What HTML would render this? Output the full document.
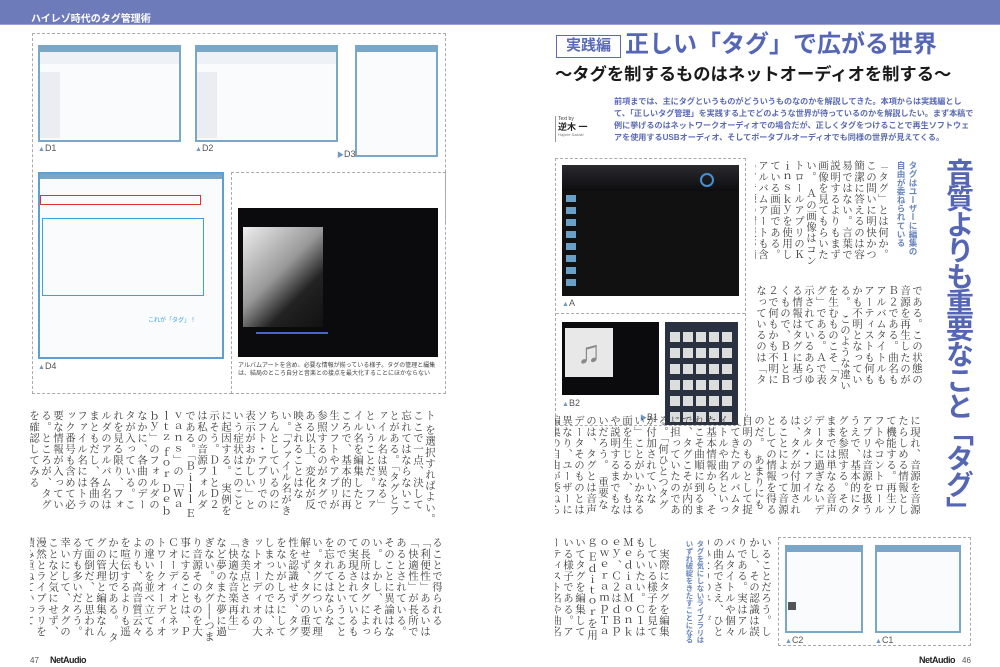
<!DOCTYPE html>
<html><head><meta charset="utf-8">
<style>
*{margin:0;padding:0;box-sizing:border-box}
body{width:1000px;height:667px;background:#fff;position:relative;overflow:hidden;font-family:"Liberation Sans","Noto Sans CJK JP",sans-serif}
.a{position:absolute}
.hdr{left:0;top:0;width:1000px;height:25px;background:#6e7bbb;border-bottom:1px solid #9aa3d3}
.v{position:absolute;writing-mode:vertical-rl;font-family:"Liberation Serif","Noto Serif CJK SC",serif;font-size:10.5px;line-height:12px;color:#3a3a3a;overflow:hidden;letter-spacing:0.6px}
.hb{position:absolute;writing-mode:vertical-rl;font-family:"Liberation Sans","Noto Sans CJK JP",sans-serif;font-weight:bold;color:#6a86bf;font-size:8.6px;line-height:12px;overflow:hidden}
.dash{position:absolute;border:1px dashed #aaa}
.win{position:absolute;background:#fafbfc;border:2px solid #7aa6c8}
.win:before{content:"";position:absolute;left:0;top:0;right:0;height:5px;background:#7aa6c8}
.dark{position:absolute;background:#0b0b0d}
.cap{position:absolute;font-size:9px;color:#555}
.cap b{color:#6f98c4;font-weight:normal;font-size:7px}
</style></head><body>
<div class="a hdr"></div>
<div class="a" style="left:31px;top:10px;color:#fff;font-size:10px;font-weight:bold">ハイレゾ時代のタグ管理術</div>

<!-- LEFT PAGE photos -->
<div class="dash" style="left:32px;top:33px;width:414px;height:190px;border-bottom:none"></div>
<div class="win" style="left:38px;top:45px;width:143px;height:97px"></div>
<div class="a" style="left:40px;top:52px;width:139px;height:12px;background:#eef2f6"></div>
<div class="a" style="left:40px;top:72px;width:20px;height:66px;background:#eaeef3"></div>
<div class="win" style="left:195px;top:45px;width:143px;height:97px"></div>
<div class="a" style="left:197px;top:52px;width:139px;height:12px;background:#eef2f6"></div>
<div class="a" style="left:197px;top:72px;width:20px;height:66px;background:#eaeef3"></div>
<div class="win" style="left:355px;top:45px;width:83px;height:112px"></div>
<div class="cap" style="left:38px;top:143px"><b>▲</b>D1</div>
<div class="cap" style="left:195px;top:143px"><b>▲</b>D2</div>
<div class="cap" style="left:337px;top:149px"><b>▶</b>D3</div>

<div class="win" style="left:38px;top:172px;width:186px;height:187px;border-color:#5d9fd0"></div>
<div class="a" style="left:40px;top:195px;width:161px;height:10px;border:1.5px solid #e03030"></div>
<div class="a" style="left:42px;top:218px;width:162px;height:78px;border:1.5px solid #3aa0e0"></div>
<div class="a" style="left:148px;top:315px;color:#3aa0e0;font-size:6px">これが「タグ」！</div>
<div class="cap" style="left:38px;top:361px"><b>▲</b>D4</div>

<div class="dash" style="left:231px;top:172px;width:215px;height:222px"></div>
<div class="dash" style="left:32px;top:222px;width:200px;height:172px;border-top:none;border-right:none"></div>
<div class="dark" style="left:238px;top:208px;width:200px;height:149px"></div>
<div class="a" style="left:243px;top:227px;width:80px;height:100px;background:linear-gradient(135deg,#eee,#999 45%,#222 70%,#111)"></div>
<div class="a" style="left:256px;top:332px;width:72px;height:2px;background:#4466cc"></div>
<div class="a" style="left:238px;top:362px;width:205px;font-size:6px;line-height:8px;color:#444">アルバムアートを含め、必要な情報が揃っている様子。タグの管理と編集は、結局のところ自分と音楽との接点を最大化することにほかならない</div>

<!-- LEFT PAGE TEXT -->
<div class="v" style="left:30px;top:410px;width:405px;height:110px">ト を選択すればよい。　ここで一点、決して忘れてはならないことがある。「タグとファイル名は異なる」ということだ。ファイル名を編集したところで、基本的に再生ソフトやアプリが参照するのがタグである以上、変化が反映されることはない。「ファイル名がきちんとしているのにソフト・アプリでの表示がおかしい」という症状はこのことに起因する。　実例を示そう。Ｄ１とＤ２は私の音源フォルダである。「Ｂｉｌｌ Ｅｖａｎｓ」の「Ｗａｌｔｚ ｆｏｒ Ｄｅｂｂｙ」のフォルダのなかに、各曲のデータが入っている。これを見る限り、フォルダのアルバム名はまともだし、各曲のファイル名にはトラック番号も含めて必要な情報が入っている。ところが、タグを確認してみると……（Ｄ３）。もちろんこれは極端な例だが、結局のところ、これと同じことが起こり得る。　Ｄ４の画像を見てみよう。これはＭｅｄｉａＭｏｎｋｅｙのタグ編集画面で、「ファイル名」と「タグ」が明確に区別されているのが分かる。残念ながらこの認識が十分に根づいているとは言い難く、それに起因する誤解や混乱もいまだに多い。　ネットオーディオは音質もさることながら、音源にディスクではなくデジタル・ファイルを用い</div>
<div class="v" style="left:30px;top:537px;width:412px;height:110px">ることで得られる「利便性」あるいは「快適性」が長所であるとされている。そのことに異論はない。しかし、それらの長所はタグによって実現されているものであるということを忘れてはならない。タグについて理解せず、タグの重要性を認識せず、タグをないがしろにしてしまったのでは、ネットオーディオの大きな美点とされる「快適な音楽再生」など夢のまた夢に過ぎない。タグ──つまり音源そのものを大事にすることは、ＰＣオーディオとネットワークオーディオの違いを並べ立てるよりも、高音質云々を喧伝するよりも遥かに大切である。　タグの管理と編集なんて面倒だ、と思われる方も多いだろう。幸いにして、タグのことなど気にせず、漫然とライブラリを積み重ねていっても、ある程度までは何とかなる場合が多い。しかし、いずれそういったライブラリは破綻をきたすことになる。冒頭で示した画像のように、ライブラリの各所で意図しない分断が生じ、正体不明の音源がはびこる。聴きたい音源を探し出すことも著しく困難になる。　タグの管理と編集は究極的にはユーザー自身に委ねられているということを忘れてはならない。　ひとりひとりの「こだわり」こそ快適性の源となる。</div>

<div class="a" style="left:30px;top:656px;font-size:8px;color:#555">47</div>
<div class="a" style="left:50px;top:655px;font-size:9px;font-weight:bold;color:#222;letter-spacing:-0.5px">NetAudio</div>

<!-- RIGHT PAGE -->
<div class="a" style="left:556px;top:35px;width:65px;height:23px;border:1.5px solid #5a6ab5;color:#5a6ab5;font-weight:bold;font-size:15px;line-height:20px;text-align:center">実践編</div>
<div class="a" style="left:625px;top:30px;color:#5566b5;font-weight:bold;font-size:24px;line-height:30px;white-space:nowrap">正しい「タグ」で広がる世界</div>
<div class="a" style="left:555px;top:63px;color:#1a1a1a;font-weight:bold;font-size:17.3px;line-height:22px;white-space:nowrap">～タグを制するものはネットオーディオを制する～</div>
<div class="a" style="left:555px;top:116px;border-left:1px solid #999;padding-left:2px;width:45px;height:26px">
<div style="font-size:5px;color:#444">Text by</div>
<div style="font-size:9px;font-weight:bold;color:#222;line-height:10px">逆木 一</div>
<div style="font-size:4px;color:#777;font-style:italic">Hajime Sakaki</div></div>
<div class="a" style="left:614px;top:96px;width:362px;color:#5a6ab5;font-weight:bold;font-size:8.1px;line-height:12px">前項までは、主にタグというものがどういうものなのかを解説してきた。本項からは実践編として、「正しいタグ管理」を実践する上でどのような世界が待っているのかを解説したい。まず本稿で例に挙げるのはネットワークオーディオでの場合だが、正しくタグをつけることで再生ソフトウェアを使用するUSBオーディオ、そしてポータブルオーディオでも同様の世界が見えてくる。</div>

<div class="dash" style="left:555px;top:158px;width:191px;height:268px"></div>
<div class="a" style="left:556px;top:313px;width:189px;height:0;border-top:1px dashed #aaa"></div>
<div class="dark" style="left:562px;top:165px;width:177px;height:131px;background:#111"></div>
<div class="a" style="left:562px;top:165px;width:177px;height:26px;background:linear-gradient(#2a2a2e,#0d0d10)"></div>
<div class="a" style="left:700px;top:173px;width:14px;height:14px;border-radius:50%;border:2px solid #4a8fd0"></div>
<div class="a" style="left:566px;top:195px;width:10px;height:95px;background:repeating-linear-gradient(#6aa0c8 0 7px,#111 7px 12px)"></div>
<div class="cap" style="left:562px;top:298px"><b>▲</b>A</div>
<div class="dark" style="left:562px;top:322px;width:97px;height:73px"></div>
<div class="a" style="left:565px;top:328px;width:48px;height:49px;background:#e8e8e8;color:#888;font-size:32px;line-height:49px;text-align:center">♫</div>
<div class="cap" style="left:562px;top:398px"><b>▲</b>B2</div>
<div class="a" style="left:665px;top:322px;width:73px;height:103px;background:#2a3242"></div>
<div class="a" style="left:670px;top:332px;width:64px;height:91px;background:repeating-linear-gradient(90deg,#ddd 0 10px,transparent 10px 13px),#2a3242;-webkit-mask:repeating-linear-gradient(#000 0 10px,transparent 10px 16px);mask:repeating-linear-gradient(#000 0 10px,transparent 10px 16px)"></div>
<div class="cap" style="left:640px;top:412px"><b>▶</b>B1</div>

<div class="a" style="left:942px;top:158px;width:32px;writing-mode:vertical-rl;color:#5566b5;font-weight:bold;font-size:28px;line-height:32px;letter-spacing:-2px">音質よりも重要なこと「タグ」</div>
<div class="hb" style="left:893px;top:161px;width:26px;height:100px">タグはユーザーに編集の自由が委ねられている</div>

<div class="v" style="left:755px;top:160px;width:133px;height:110px">「タグ」とは何か。この問いに明快かつ簡潔に答えるのは容易ではない。言葉で説明するよりもまず画像を見てもらいたい。　Ａの画像はコントロールアプリのＫｉｎｓｋｙを使用している画面である。アルバムアートも含め、音源の情報が満載である。次にＢ１の画像を見てもらいたい。アルバムアートは一切表示されず、無意味な文字列と「不明」が満載</div>
<div class="v" style="left:755px;top:285px;width:167px;height:110px">である。この状態の音源を再生したのがＢ２である。曲名もアルバムタイトルもアーティストも何もかも不明となっている。　このような違いを生むものこそ「タグ」である。Ａで表示されているあらゆる情報はタグに基づくもので、Ｂ１とＢ２で何もかも不明になっているのは「タグが付加されていない」からにほかならない。すなわち、「タグ」とは「音源に内的に付加された情報」と、その総体」を指す。そして「内的に」とは言いつつも、あらゆる局面で表</div>
<div class="v" style="left:555px;top:415px;width:365px;height:105px">に現れ、音源を音源たらしめる情報として機能する。再生ソフトやコントロールアプリは音源を扱ううえで、基本的にタグを参照する。そのままでは単なる音声データに過ぎないデジタル・ファイルは、タグが付加されることによって音源としての情報を得るのだ。　あまりにも自明のものとして捉えてきたアルバムタイトルや曲名といった基本情報から、それこそ曲順に到るまで、タグこそが内的に担っていたのである。「何ひとつタグが付加されていない」ことがいかなる面を生じるか、もはや説明するまでもないだろう。　重要なのは、タグとは音声データそのものとは異なり、ユーザーに編集の自由が委ねられているということだ。ＣＤリッピングや配信などで入手した音源には、大抵の場合最初からタグが付加されている。ネットオーディオを楽しんでいるユーザーのなかには、これらのタグはすでに確定されていて編集できない、と思っている方も</div>
<div class="v" style="left:708px;top:537px;width:63px;height:110px">いることだろう。しかし、その認識は誤りである。実はアルバムタイトルや個々の曲名でさえ、ひとりひとりのユーザーが編集する余地があるのである。</div>
<div class="hb" style="left:683px;top:540px;width:23px;height:106px;font-size:7.4px;line-height:11px">タグを気にしないライブラリはいずれ破綻をきたすことになる</div>
<div class="v" style="left:555px;top:537px;width:114px;height:110px">　実際にタグを編集している様子を見てもらいたい。Ｃ１はＭｅｄｉａＭｏｎｋｅｙ、Ｃ２はｄＢｐｏｗｅｒａｍｐＴａｇ Ｅｄｉｔｏｒを用いてタグを編集している様子である。アーティスト名や曲名を含む多くの項目が編集可能なのが分かってもらえるはずだ。タグを編集するソフトは数多くあり、自分に合ったソフ</div>

<div class="dash" style="left:778px;top:537px;width:193px;height:109px"></div>
<div class="win" style="left:785px;top:545px;width:78px;height:88px"></div>
<div class="a" style="left:788px;top:602px;width:8px;height:8px;background:#555"></div>
<div class="win" style="left:875px;top:545px;width:86px;height:88px"></div>
<div class="cap" style="left:785px;top:635px"><b>▲</b>C2</div>
<div class="cap" style="left:875px;top:635px"><b>▲</b>C1</div>

<div class="a" style="left:919px;top:655px;font-size:9px;font-weight:bold;color:#222;letter-spacing:-0.5px">NetAudio</div>
<div class="a" style="left:962px;top:656px;font-size:8px;color:#555">46</div>
</body></html>
